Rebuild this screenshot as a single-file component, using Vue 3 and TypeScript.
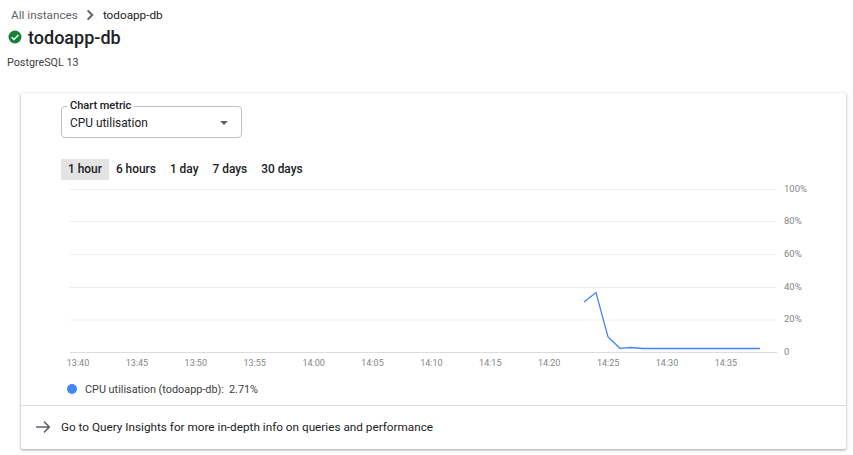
<script setup lang="ts">
const ranges = ['1 hour', '6 hours', '1 day', '7 days', '30 days']
const grid = [
  { y: 9.5, label: '100%' },
  { y: 41.5, label: '80%' },
  { y: 74.5, label: '60%' },
  { y: 107.5, label: '40%' },
  { y: 140, label: '20%' },
  { y: 172.5, label: '0' },
]
const times = ['13:40', '13:45', '13:50', '13:55', '14:00', '14:05', '14:10', '14:15', '14:20', '14:25', '14:30', '14:35']
const tickX = (i: number) => 57 + i * 58.9
const line = '563,122 575,112.5 587,157 599,168.3 610,167.5 622,168.5 739,168.5'
</script>

<template>
  <div class="page">
    <nav class="crumbs">
      <span class="crumb-link">All instances</span>
      <svg class="crumb-sep" width="12" height="12" viewBox="0 0 12 12"><path d="M3.6 1.4 8.2 6 3.6 10.6" fill="none" stroke="#5f6368" stroke-width="2" /></svg>
      <span class="crumb-current">todoapp-db</span>
    </nav>
    <div class="title-row">
      <svg width="14" height="14" viewBox="0 0 14 14">
        <circle cx="7" cy="7" r="6.5" fill="#188038" />
        <path d="M3.7 7.2 6 9.5 10.4 5" fill="none" stroke="#fff" stroke-width="1.5" />
      </svg>
      <h1>todoapp-db</h1>
    </div>
    <div class="subtitle">PostgreSQL 13</div>

    <section class="card">
      <div class="card-body">
        <div class="metric">
          <span class="metric-label">Chart metric</span>
          <span class="metric-value">CPU utilisation</span>
          <span class="metric-caret"></span>
        </div>
        <div class="ranges">
          <span v-for="(r, i) in ranges" :key="r" class="range" :class="{ active: i === 0 }">{{ r }}</span>
        </div>
      </div>
      <svg class="chart" width="825" height="190" viewBox="0 0 825 190">
        <g v-for="g in grid" :key="g.label">
          <line x1="49" x2="756" :y1="g.y" :y2="g.y" :stroke="g.label === '0' ? '#dadce0' : '#eeeeee'" />
          <text x="763" :y="g.y + 2" class="tick y-tick">{{ g.label }}</text>
        </g>
        <text v-for="(t, i) in times" :key="t" :x="tickX(i)" y="186" text-anchor="middle" class="tick">{{ t }}</text>
        <polyline :points="line" fill="none" stroke="#4285f4" stroke-width="1.3" />
      </svg>
      <div class="legend">
        <span class="dot"></span>
        <span>CPU utilisation (todoapp-db):</span>
        <span class="legend-value">2.71%</span>
      </div>
      <div class="footer">
        <svg width="14" height="12" viewBox="0 0 14 12"><path d="M0 6H13.5M8 .6 13.4 6 8 11.4" fill="none" stroke="#5f6368" stroke-width="1.5" /></svg>
        <span>Go to Query Insights for more in-depth info on queries and performance</span>
      </div>
    </section>
  </div>
</template>

<style scoped>
.page {
  width: 853px;
  height: 455px;
  overflow: hidden;
  background: #fff;
  font-family: Roboto, "Liberation Sans", sans-serif;
  color: #202124;
  box-sizing: border-box;
  padding-top: 7px;
}
.crumbs {
  display: flex;
  align-items: center;
  height: 16px;
  padding-left: 11px;
  font-size: 11.75px;
}
.crumb-link {
  color: #5f6368;
}
.crumb-sep {
  margin: 0 7px 0 6px;
}
.title-row {
  display: flex;
  align-items: center;
  gap: 6px;
  margin-top: 2px;
  padding-left: 8px;
  height: 24px;
}
h1 {
  margin: 0;
  font-size: 18px;
  font-weight: 500;
  color: #202124;
}
.subtitle {
  margin-top: 6px;
  padding-left: 7px;
  font-size: 10.75px;
  line-height: 16px;
  color: #3c4043;
}
.card {
  margin: 22px 7px 0 21px;
  height: 356px;
  background: #fff;
  border-radius: 2px;
  box-shadow: 0 1px 2px rgba(60, 64, 67, 0.3), 0 1px 3px 1px rgba(60, 64, 67, 0.15);
}
.card-body {
  padding: 13px 0 0 40px;
}
.metric {
  position: relative;
  display: flex;
  align-items: center;
  width: 181px;
  height: 32px;
  box-sizing: border-box;
  border: 1px solid #bdc1c6;
  border-radius: 4px;
  padding: 1px 8px 0;
  font-size: 11.9px;
}
.metric-label {
  position: absolute;
  top: -8px;
  left: 5px;
  padding: 0 3px;
  background: #fff;
  font-size: 11px;
  line-height: 14px;
  font-weight: 500;
}
.metric-caret {
  margin-left: auto;
  margin-right: 5px;
  border-left: 4.5px solid transparent;
  border-right: 4.5px solid transparent;
  border-top: 4.5px solid #5f6368;
}
.ranges {
  display: flex;
  margin-top: 21px;
  font-size: 11.9px;
  font-weight: 500;
}
.range {
  height: 21px;
  line-height: 21px;
  padding: 0 7px;
}
.active {
  background: #e3e3e3;
}
.chart {
  display: block;
}
.tick {
  font-family: Roboto, "Liberation Sans", sans-serif;
  font-size: 9px;
  fill: #858585;
}
.y-tick {
  font-size: 9.5px;
}
.legend {
  display: flex;
  align-items: center;
  height: 35px;
  box-sizing: border-box;
  padding: 3px 0 0 46px;
  font-size: 10.85px;
  color: #3c4043;
}
.dot {
  width: 10px;
  height: 10px;
  margin-right: 8px;
  border-radius: 50%;
  background: #4285f4;
}
.legend-value {
  margin-left: 5px;
}
.footer {
  display: flex;
  align-items: center;
  height: 44px;
  box-sizing: border-box;
  border-top: 1px solid #dadce0;
  padding: 0 0 2px 15px;
  font-size: 11.75px;
}
.footer svg {
  margin-right: 11px;
}
</style>
